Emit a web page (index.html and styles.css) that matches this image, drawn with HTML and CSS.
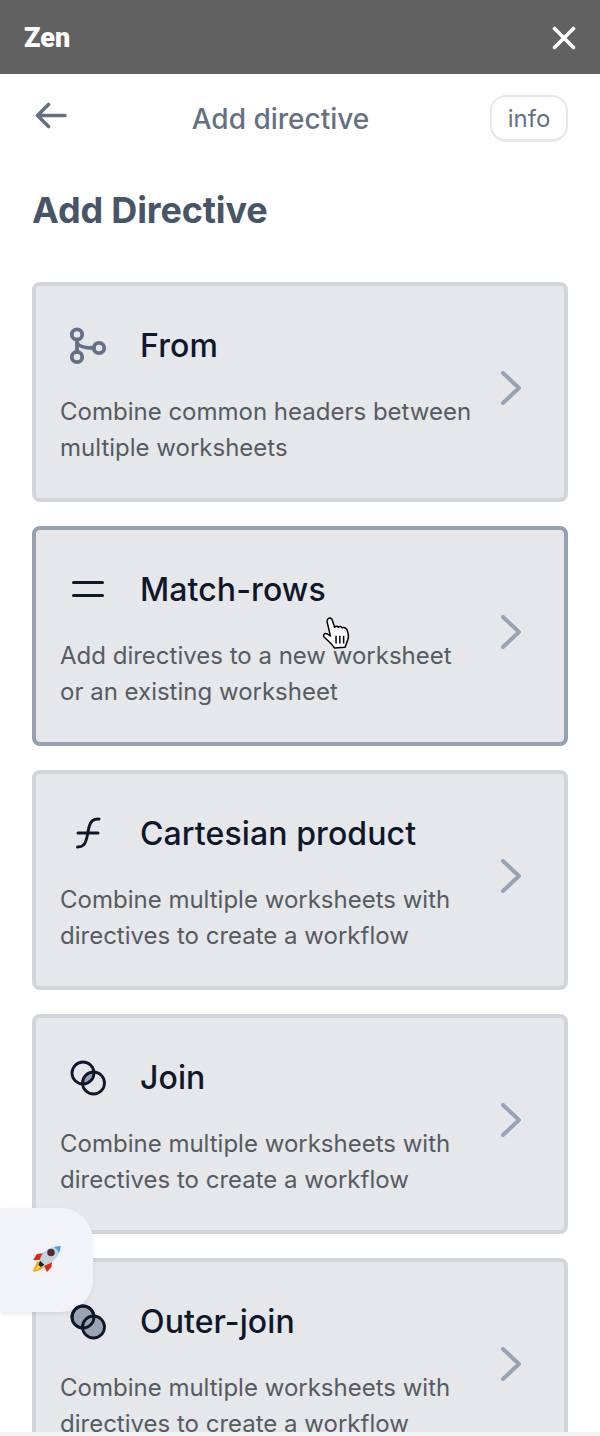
FILE: index.html
```html
<!DOCTYPE html>
<html lang="en">
<head>
  <meta charset="UTF-8">
  <meta name="viewport" content="width=device-width, initial-scale=1.0">
  <title>Zen - Add directive</title>
  <link rel="stylesheet" href="styles.css">
</head>
<body>
  <div class="app">

    <!-- window bar -->
    <header class="top-bar">
      <span class="brand">Zen</span>
      <svg class="close-icon" viewBox="0 0 24 24" fill="none" stroke="#fff" stroke-width="3.6" stroke-linecap="round">
        <path d="M2.5 2.5 L21.5 21.5 M21.5 2.5 L2.5 21.5"/>
      </svg>
    </header>

    <main class="content">
      <div class="nav-row">
        <svg class="back-icon" viewBox="0 0 32 28" fill="none" stroke="#667085" stroke-width="3.6" stroke-linecap="round" stroke-linejoin="round">
          <path d="M30 13.5 H3 M13.5 2.5 L2.5 13.5 L13.5 24.5"/>
        </svg>
        <span class="nav-title">Add directive</span>
        <button class="info-button">info</button>
      </div>

      <h1 class="page-title">Add Directive</h1>

      <div class="card-list">
        <div class="card">
          <div class="card-body">
            <div class="card-head">
              <svg class="card-icon" viewBox="0 0 40 40" fill="none" stroke="#667085" stroke-width="3.8" stroke-linecap="round">
                <circle cx="9" cy="9.500" r="5.200"/>
                <circle cx="9" cy="32" r="5.200"/>
                <circle cx="31" cy="23" r="5.200"/>
                <path d="M9 14.500 V27 M9 18 C11 22 17 23 26 23"/>
              </svg>
              <span class="card-title">From</span>
            </div>
            <p class="card-text">Combine common headers between multiple worksheets</p>
          </div>
          <svg class="chevron" viewBox="0 0 22 34" fill="none" stroke="#98a3b3" stroke-width="4" stroke-linecap="round" stroke-linejoin="round">
            <path d="M3 2 L19 17 L3 32"/>
          </svg>
        </div>

        <div class="card card-hover">
          <div class="card-body">
            <div class="card-head">
              <svg class="card-icon" viewBox="0 0 40 40" fill="none" stroke="#0f172a" stroke-width="3" stroke-linecap="round">
                <path d="M5.500 13.500 H34.500 M5.500 26.500 H34.500"/>
              </svg>
              <span class="card-title">Match-rows</span>
            </div>
            <p class="card-text">Add directives to a new worksheet or an existing worksheet</p>
          </div>
          <svg class="chevron" viewBox="0 0 22 34" fill="none" stroke="#98a3b3" stroke-width="4" stroke-linecap="round" stroke-linejoin="round">
            <path d="M3 2 L19 17 L3 32"/>
          </svg>
          <svg class="hand-cursor" viewBox="0 0 32 36" stroke="#000" stroke-width="1.600" stroke-linejoin="round">
            <path fill="#fff" d="M7 2.500 C8.500 1.500 10.500 2.500 11 4.500 L13.500 12 C14.500 10.500 16.500 10.500 17.500 12 C18.500 10.500 20.500 11 21.500 12.500 C23 11.500 25.500 12.500 26.500 14.500 C28 18 28.500 22 27.500 25 L24.500 33 L13.500 34 C11.500 31 6.500 26 2.500 22.500 C1 21 2 18.500 4 18.500 C5.500 18.500 7.500 20 9 21 L5.500 6 C5.300 4.500 5.800 3.200 7 2.500 Z"/>
            <path fill="none" d="M15 21 V29 M19 21 V29 M23 21 V29"/>
          </svg>
        </div>

        <div class="card">
          <div class="card-body">
            <div class="card-head">
              <svg class="card-icon" viewBox="0 0 40 40" fill="none" stroke="#0f172a" stroke-width="3" stroke-linecap="round">
                <path d="M9.500 34 C15 34 17 32 19 24 L21 14 C22.500 8 25 6 31 6 M10 20 H30"/>
              </svg>
              <span class="card-title">Cartesian product</span>
            </div>
            <p class="card-text">Combine multiple worksheets with directives to create a workflow</p>
          </div>
          <svg class="chevron" viewBox="0 0 22 34" fill="none" stroke="#98a3b3" stroke-width="4" stroke-linecap="round" stroke-linejoin="round">
            <path d="M3 2 L19 17 L3 32"/>
          </svg>
        </div>

        <div class="card">
          <div class="card-body">
            <div class="card-head">
              <svg class="card-icon" viewBox="0 0 40 40" fill="none" stroke="#0f172a" stroke-width="2.800">
                <path fill="#98a3b3" stroke="none" d="M25.950 15.010 A11 11 0 0 1 14.550 26.990 A11 11 0 0 1 25.950 15.010 Z"/>
                <circle cx="15" cy="16" r="11"/>
                <circle cx="25.500" cy="26" r="11"/>
              </svg>
              <span class="card-title">Join</span>
            </div>
            <p class="card-text">Combine multiple worksheets with directives to create a workflow</p>
          </div>
          <svg class="chevron" viewBox="0 0 22 34" fill="none" stroke="#98a3b3" stroke-width="4" stroke-linecap="round" stroke-linejoin="round">
            <path d="M3 2 L19 17 L3 32"/>
          </svg>
        </div>

        <div class="card">
          <div class="card-body">
            <div class="card-head">
              <svg class="card-icon" viewBox="0 0 40 40" fill="#98a3b3" stroke="#0f172a" stroke-width="2.800">
                <circle cx="15" cy="16" r="11"/>
                <circle cx="25.500" cy="26" r="11"/>
                <circle cx="15" cy="16" r="11" fill="none"/>
              </svg>
              <span class="card-title">Outer-join</span>
            </div>
            <p class="card-text">Combine multiple worksheets with directives to create a workflow</p>
          </div>
          <svg class="chevron" viewBox="0 0 22 34" fill="none" stroke="#98a3b3" stroke-width="4" stroke-linecap="round" stroke-linejoin="round">
            <path d="M3 2 L19 17 L3 32"/>
          </svg>
        </div>
      </div>
    </main>

    <div class="bottom-line"></div>

    <!-- floating launcher -->
    <div class="launcher">
      <svg class="rocket" viewBox="0 0 30 30">
        <path fill="#e8230f" d="M12 8 L5 9 L1 15 L8 15 Z"/>
        <path fill="#e8230f" d="M20 16 L19.500 22 L15 27 L12 21 Z"/>
        <path fill="#f9a51a" d="M6 16 C4 19 2 22 1 27 C5 26.500 9 25 12 22 Z"/>
        <path fill="#fde25a" d="M6 20 C5 22 4 23.500 3.500 25 C5.500 24.500 7 23.500 8.500 22 Z"/>
        <path fill="#c4d4de" d="M28.500 1 C21 1 14 4 10 9.500 L7.500 15 L13 20.500 L18.500 18 C24 14 28.500 8 28.500 1 Z"/>
        <path fill="#4fa3dc" d="M28.500 1 C26 1 24 1.500 22 2.500 C24.500 3.500 26 5.500 27 8 C28 6 28.500 3.500 28.500 1 Z"/>
        <circle cx="19" cy="7.500" r="3.200" fill="#7d1a1a" stroke="#33424c" stroke-width="1.200"/>
        <path fill="#222" d="M8 15.500 L12.500 20 L8.500 22 L6.500 20 Z"/>
      </svg>
    </div>
  </div>
</body>
</html>
```

FILE: styles.css
```css
/* ===== General Styles ===== */
* {
  box-sizing: border-box;
}

body {
  margin: 0;
  padding: 0;
  font-family: 'Inter', sans-serif;
  background-color: #fff;
}

.app {
  position: relative;
  display: flex;
  flex-direction: column;
  height: 1436px;
  overflow: hidden;
}

/* ===== Top Bar ===== */
.top-bar {
  flex: none;
  height: 74px;
  padding: 1px 24px 0;
  display: flex;
  justify-content: space-between;
  align-items: center;
  background-color: #616161;
}

.brand {
  font-family: 'Roboto', sans-serif;
  font-size: 27px;
  font-weight: 900;
  color: #fff;
}

.close-icon {
  width: 24px;
  height: 24px;
}

/* ===== Content ===== */
.content {
  flex: 1;
  min-height: 0;
  padding: 20px 32px 0;
  overflow: hidden;
}

.nav-row {
  display: flex;
  justify-content: space-between;
  align-items: center;
  height: 50px;
}

.back-icon {
  width: 32px;
  height: 28px;
  margin: -6px 0 0 3px;
}

.nav-title {
  font-size: 28px;
  font-weight: 500;
  color: #667085;
  margin-left: 4px;
}

.info-button {
  width: 78px;
  height: 47px;
  margin-top: -1px;
  padding: 0;
  font-family: 'Inter', sans-serif;
  font-size: 24px;
  color: #667085;
  background-color: #fff;
  border: 2px solid #e5e7eb;
  border-bottom-width: 3px;
  border-radius: 16px;
}

.page-title {
  margin: 44px 0 50px;
  font-size: 36px;
  line-height: 44px;
  font-weight: 700;
  letter-spacing: -0.15px;
  color: #475569;
}

/* ===== Cards ===== */
.card-list {
  display: flex;
  flex-direction: column;
  gap: 24px;
}

.card {
  position: relative;
  flex: none;
  height: 220px;
  padding: 39px 42px 0 24px;
  display: flex;
  justify-content: space-between;
  align-items: flex-start;
  background-color: #e5e7eb;
  border: 4px solid #d1d5db;
  border-radius: 8px;
}

.card-hover {
  border-color: #95a1b1;
}

.card-body {
  width: 420px;
}

.card-head {
  display: flex;
  align-items: center;
  height: 40px;
  gap: 32px;
  padding-left: 8px;
}

.card-icon {
  position: relative;
  z-index: 2;
  flex: none;
  width: 40px;
  height: 40px;
}

.card-title {
  font-size: 32px;
  font-weight: 500;
  letter-spacing: 0.1px;
  color: #0f172a;
}

.card-text {
  margin: 29px 0 0;
  font-size: 24px;
  line-height: 36px;
  color: #565b63;
}

.chevron {
  flex: none;
  width: 22px;
  height: 34px;
  margin-top: 46px;
}

.hand-cursor {
  position: absolute;
  left: 285px;
  top: 86px;
  width: 32px;
  height: 34px;
}

.bottom-line {
  flex: none;
  height: 4px;
  background-color: #f1f3f5;
}

/* ===== Launcher ===== */
.launcher {
  position: absolute;
  z-index: 1;
  left: 0;
  top: 1208px;
  width: 93px;
  height: 104px;
  display: flex;
  justify-content: center;
  align-items: center;
  background-color: #f1f3f8;
  border-radius: 0 32px 32px 0;
  box-shadow: 0 2px 4px rgba(0, 0, 0, 0.08);
}

.rocket {
  width: 30px;
  height: 30px;
}
```
